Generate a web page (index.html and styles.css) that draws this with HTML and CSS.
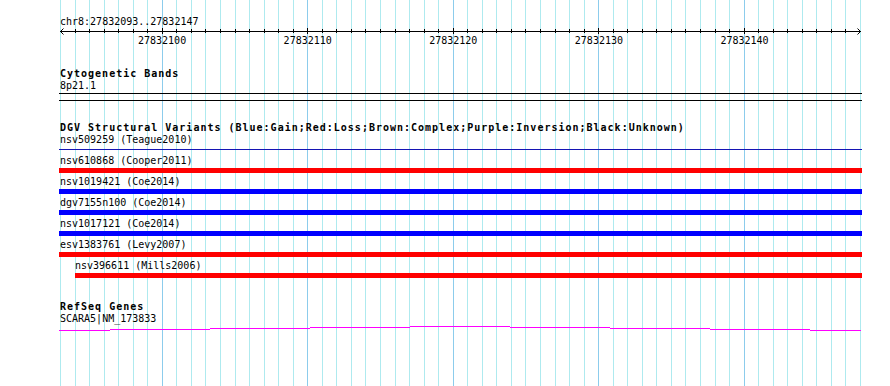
FILE: index.html
```html
<!DOCTYPE html>
<html lang="en">
<head>
<meta charset="utf-8">
<title>chr8:27832093..27832147</title>
<link rel="stylesheet" href="styles.css">
</head>
<body>
<div class="page">
  <svg class="grid" width="890" height="386" viewBox="0 0 890 386" aria-hidden="true">
    <path class="grid-minor" d="M60.5 0V386M75.5 0V386M89.5 0V386M104.5 0V386M118.5 0V386M133.5 0V386M147.5 0V386M176.5 0V386M191.5 0V386M205.5 0V386M220.5 0V386M235.5 0V386M249.5 0V386M264.5 0V386M278.5 0V386M293.5 0V386M322.5 0V386M336.5 0V386M351.5 0V386M365.5 0V386M380.5 0V386M395.5 0V386M409.5 0V386M424.5 0V386M438.5 0V386M467.5 0V386M482.5 0V386M496.5 0V386M511.5 0V386M525.5 0V386M540.5 0V386M555.5 0V386M569.5 0V386M584.5 0V386M613.5 0V386M627.5 0V386M642.5 0V386M656.5 0V386M671.5 0V386M685.5 0V386M700.5 0V386M715.5 0V386M729.5 0V386M758.5 0V386M773.5 0V386M787.5 0V386M802.5 0V386M816.5 0V386M831.5 0V386M845.5 0V386M860.5 0V386"/>
    <path class="grid-major" d="M162.5 0V386M307.5 0V386M453.5 0V386M598.5 0V386M744.5 0V386"/>
  </svg>

  <div class="tracks">
    <div class="txt">chr8:27832093..27832147</div>
    <svg class="ruler" width="803" height="7" viewBox="59 28 803 7" aria-hidden="true">
      <path class="ruler-line" d="M60 31.5H861"/>
      <path class="ruler-tick" d="M75.5 29V33M89.5 29V33M104.5 29V33M118.5 29V33M133.5 29V33M147.5 29V33M176.5 29V33M191.5 29V33M205.5 29V33M220.5 29V33M235.5 29V33M249.5 29V33M264.5 29V33M278.5 29V33M293.5 29V33M322.5 29V33M336.5 29V33M351.5 29V33M365.5 29V33M380.5 29V33M395.5 29V33M409.5 29V33M424.5 29V33M438.5 29V33M467.5 29V33M482.5 29V33M496.5 29V33M511.5 29V33M525.5 29V33M540.5 29V33M555.5 29V33M569.5 29V33M584.5 29V33M613.5 29V33M627.5 29V33M642.5 29V33M656.5 29V33M671.5 29V33M685.5 29V33M700.5 29V33M715.5 29V33M729.5 29V33M758.5 29V33M773.5 29V33M787.5 29V33M802.5 29V33M816.5 29V33M831.5 29V33M845.5 29V33"/>
      <path class="ruler-tick" d="M162.5 28V34M307.5 28V34M453.5 28V34M598.5 28V34M744.5 28V34"/>
      <path class="ruler-arrow" d="M63.5 28.5L60.5 31.5L63.5 34.5M857.5 28.5L860.5 31.5L857.5 34.5"/>
    </svg>
    <div class="ruler-labels">
      <span>27832100</span><span>27832110</span><span>27832120</span><span>27832130</span><span>27832140</span>
    </div>

    <section class="track cyto">
      <div class="title">Cytogenetic Bands</div>
      <div class="txt">8p21.1</div>
      <div class="band"></div>
    </section>

    <section class="track dgv">
      <div class="title">DGV Structural Variants (Blue:Gain;Red:Loss;Brown:Complex;Purple:Inversion;Black:Unknown)</div>
      <div class="feature">
        <div class="txt">nsv509259 (Teague2010)</div>
        <div class="slot"><div class="bar thin"></div></div>
      </div>
      <div class="feature">
        <div class="txt">nsv610868 (Cooper2011)</div>
        <div class="slot"><div class="bar loss"></div></div>
      </div>
      <div class="feature">
        <div class="txt">nsv1019421 (Coe2014)</div>
        <div class="slot"><div class="bar gain"></div></div>
      </div>
      <div class="feature">
        <div class="txt">dgv7155n100 (Coe2014)</div>
        <div class="slot"><div class="bar gain"></div></div>
      </div>
      <div class="feature">
        <div class="txt">nsv1017121 (Coe2014)</div>
        <div class="slot"><div class="bar gain"></div></div>
      </div>
      <div class="feature">
        <div class="txt">esv1383761 (Levy2007)</div>
        <div class="slot"><div class="bar loss"></div></div>
      </div>
      <div class="feature indent">
        <div class="txt">nsv396611 (Mills2006)</div>
        <div class="slot"><div class="bar loss"></div></div>
      </div>
    </section>

    <section class="track refseq">
      <div class="title">RefSeq Genes</div>
      <div class="txt">SCARA5|NM_173833</div>
      <svg class="intron" width="803" height="6" viewBox="59 325 803 6" aria-hidden="true">
        <path d="M59 330.5H110M110 329.5H210M210 328.5H310M310 327.5H410M410 326.5H510M510 327.5H610M610 328.5H710M710 329.5H810M810 330.5H861"/>
      </svg>
    </section>
  </div>
</div>
</body>
</html>
```
FILE: styles.css
```css
html, body {
  margin: 0;
  padding: 0;
  background: #ffffff;
}

.page {
  position: relative;
  width: 890px;
  height: 386px;
  overflow: hidden;
  font-family: "DejaVu Sans Mono", "Liberation Mono", monospace;
  font-size: 10px;
  color: #000000;
}

.grid {
  position: absolute;
  left: 0;
  top: 0;
  z-index: 0;
}

.grid path {
  fill: none;
  stroke-width: 1;
  shape-rendering: crispEdges;
}

.grid-minor { stroke: #aeeaef; }
.grid-major { stroke: #8cccec; }

.tracks {
  position: relative;
  z-index: 1;
  width: 803px;
  padding: 16px 0 0 59px;
  display: flex;
  flex-direction: column;
}

.txt,
.title {
  height: 12px;
  line-height: 12px;
  padding-left: 1px;
  white-space: pre;
}

.title {
  font-weight: bold;
  letter-spacing: 1px;
}

.ruler {
  display: block;
}

.ruler path {
  fill: none;
  stroke: #000000;
  stroke-width: 1;
}

.ruler-line,
.ruler-tick {
  shape-rendering: crispEdges;
}

.ruler-labels {
  display: flex;
  height: 11px;
  line-height: 11px;
  padding-left: 79px;
  gap: 97.45px;
  white-space: pre;
}

.cyto {
  margin-top: 22px;
}

.band {
  margin-top: 1px;
  height: 6px;
  border-top: 1px solid #000000;
  border-bottom: 1px solid #000000;
}

.dgv {
  margin-top: 21px;
}

.feature {
  display: flex;
  flex-direction: column;
}

.slot {
  margin-top: 1px;
  margin-bottom: 2px;
  height: 6px;
}

.bar {
  height: 5px;
}

.bar.thin {
  height: 1px;
  margin-top: 2px;
  background: #1414b4;
}

.bar.loss { background: #ff0000; }
.bar.gain { background: #0000ff; }

.feature.indent .txt {
  padding-left: 16px;
}

.feature.indent .slot {
  margin-left: 16px;
}

.refseq {
  margin-top: 20px;
}

.intron {
  display: block;
}

.intron path {
  fill: none;
  stroke: #ff00ff;
  stroke-width: 1;
  shape-rendering: crispEdges;
}
```
